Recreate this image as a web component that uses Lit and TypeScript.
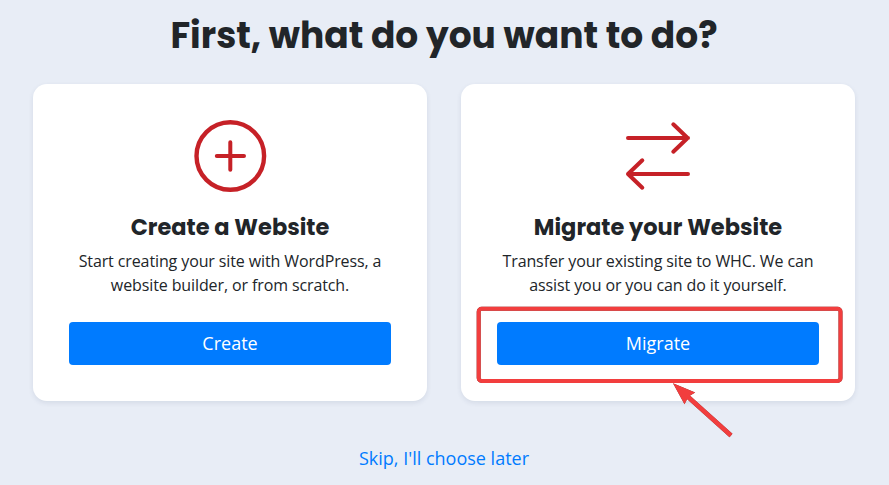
import { LitElement, html, svg, css } from "lit";
import { customElement, property } from "lit/decorators.js";

const createIcon = svg`
  <circle cx="36.3" cy="36" r="33.8" stroke-width="4.4" />
  <path d="M36.3 22.2v27.6M22.8 36h27.2" />`;

const migrateIcon = svg`
  <path d="M6 18H66M51.3 4.3L65.6 18L51.3 31.7" />
  <path d="M66 54H6M20.3 40.3L6 54L20.3 67.7" />`;

@customElement("choice-card")
export class ChoiceCard extends LitElement {
  @property() heading = "";
  @property() text = "";
  @property() action = "";
  @property() icon = "";

  static styles = css`
    :host {
      display: flex;
      flex-direction: column;
      align-items: center;
      box-sizing: border-box;
      height: 317px;
      padding: 36px;
      background: #fff;
      border-radius: 14px;
      box-shadow: 0 2px 5px rgba(40, 60, 100, 0.1);
      text-align: center;
    }
    .icon {
      display: block;
      flex: none;
      width: 72px;
      height: 72px;
      overflow: visible;
      fill: none;
      stroke: #c62127;
      stroke-width: 4;
      stroke-linecap: round;
      stroke-linejoin: round;
    }
    .heading {
      margin: 20px 0 7px;
      font: 700 22.5px/30px Poppins, sans-serif;
      white-space: nowrap;
    }
    .text {
      margin: 0;
      width: 322px;
      font-size: 16px;
      line-height: 24px;
      letter-spacing: -0.11px;
    }
    .action {
      width: 100%;
      height: 43px;
      margin-top: 25px;
      flex: none;
      padding: 0;
      border: 0;
      border-radius: 4px;
      background: #007bff;
      color: #fff;
      font: 400 18px/43px "Open Sans", sans-serif;
    }
  `;

  render() {
    return html`
      <svg class="icon" viewBox="0 0 72 72">
        ${this.icon === "create" ? createIcon : migrateIcon}
      </svg>
      <h2 class="heading">${this.heading}</h2>
      <p class="text">${this.text}</p>
      <button class="action">${this.action}</button>
    `;
  }
}

@customElement("app-root")
export class AppRoot extends LitElement {
  static styles = css`
    :host {
      display: flex;
      flex-direction: column;
      align-items: center;
      position: relative;
      box-sizing: border-box;
      height: 485px;
      padding: 12px 1px 0 0;
      overflow: hidden;
      background: #e8edf6;
      color: #212529;
      font-family: "Open Sans", sans-serif;
    }
    .title {
      margin: 0;
      font: 700 36px/48px Poppins, sans-serif;
      white-space: nowrap;
    }
    .cards {
      display: grid;
      grid-template-columns: 394px 394px;
      gap: 34px;
      margin-top: 24px;
    }
    .skip {
      margin-top: 44px;
      font-size: 18px;
      line-height: 27px;
      color: #007bff;
      text-decoration: none;
    }
    .callout {
      position: absolute;
      left: 469px;
      top: 299px;
      filter: drop-shadow(0 0 0.6px rgba(60, 20, 20, 0.8));
      pointer-events: none;
    }
  `;

  render() {
    return html`
      <h1 class="title">First, what do you want to do?</h1>
      <div class="cards">
        <choice-card
          icon="create"
          heading="Create a Website"
          text="Start creating your site with WordPress, a website builder, or from scratch."
          action="Create"
        ></choice-card>
        <choice-card
          icon="migrate"
          heading="Migrate your Website"
          text="Transfer your existing site to WHC. We can assist you or you can do it yourself."
          action="Migrate"
        ></choice-card>
      </div>
      <a class="skip" href="#">Skip, I'll choose later</a>
      <svg class="callout" width="384" height="144" viewBox="469 299 384 144">
        <rect x="478.7" y="308.8" width="361.8" height="72.2" rx="3" fill="none" stroke="#f23e3e" stroke-width="4" />
        <path d="M687 396L731 435.5" stroke="#f23e3e" stroke-width="4.4" />
        <path d="M673 383.3L695.2 392.6L688.5 396.5L684.5 404.3Z" fill="#f23e3e" />
      </svg>
    `;
  }
}
